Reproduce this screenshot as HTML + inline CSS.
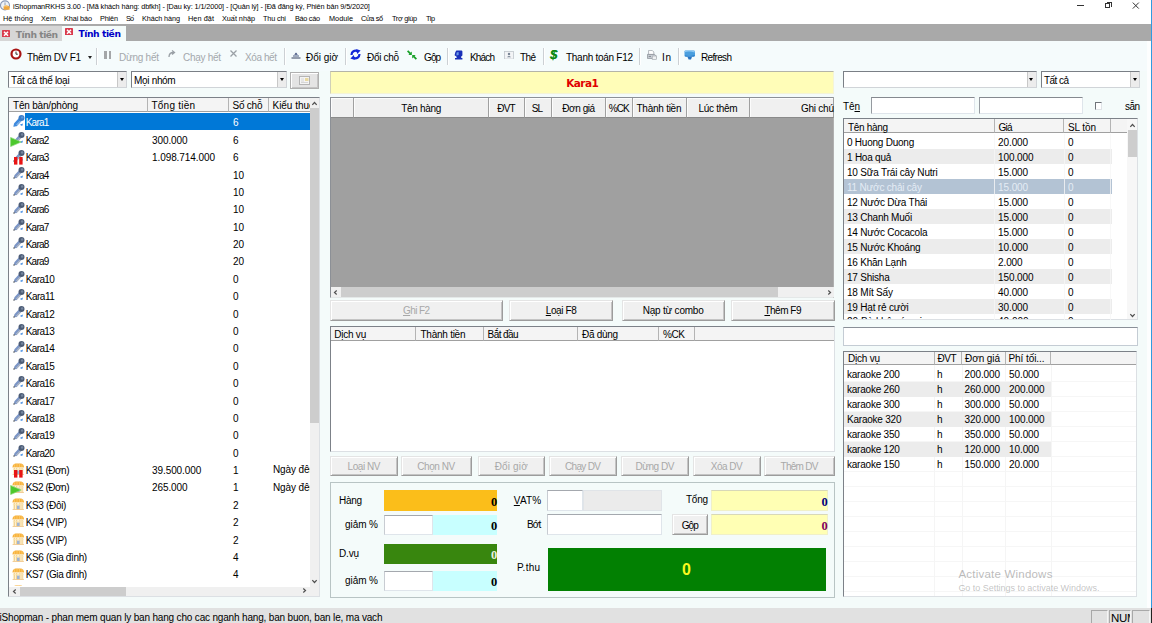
<!DOCTYPE html>
<html><head><meta charset="utf-8"><title>iShopmanRKHS</title>
<style>
*{box-sizing:border-box;margin:0;padding:0}
html,body{width:1152px;height:623px;overflow:hidden}
body{background:#f4fbfa;font-family:"Liberation Sans",sans-serif;font-size:10px;color:#000;position:relative}
.a{position:absolute;white-space:nowrap}
.t{position:absolute;white-space:nowrap;line-height:12px}
.btn{position:absolute;background:#f0f0f0;border:1px solid #9c9c9c;border-top-color:#e4e4e4;border-left-color:#e4e4e4;box-shadow:inset 1px 1px 0 #fff,inset -1px -1px 0 #c4c4c4}
.btn.dis{background:#f0f0f0}
.hdr{position:absolute;background:#f4f4f4;border-right:1px solid #b4b4b4;border-bottom:1px solid #a0a0a0}
.inp{position:absolute;background:#fff;border:1px solid #dfe5eb;border-top-color:#a4a8ae;border-left-color:#c8ccd2}
.cmb{position:absolute;background:#fff;border:1px solid #7a7f86;border-bottom-color:#d0d4d8;border-right-color:#d0d4d8}
.cmb i{position:absolute;right:0;top:0;bottom:0;width:9px;background:#ececec;border-left:1px solid #c8c8c8}
.cmb i:after{content:"";position:absolute;left:1.5px;top:6px;border:2.5px solid transparent;border-top:3px solid #000}
.sep{position:absolute;width:1px;background:#ccd0d4;top:48px;height:17px;box-shadow:1px 0 0 #fff}
.lst{position:absolute;background:#fff;border:1px solid #7c8188;border-right-color:#dce0e4;border-bottom-color:#dce0e4;overflow:hidden}
</style></head><body>

<div class="a" style="left:0;top:0;width:1152px;height:25px;background:#fff"></div>
<svg class="a" style="left:0;top:0" width="11" height="11" viewBox="0 0 11 11"><circle cx="5" cy="5.4" r="4.5" fill="#eef2f6" stroke="#8a9ab8" stroke-width="1.1"/><path d="M5 2.4V5.4" stroke="#7888a8" stroke-width=".8"/><path d="M3.6 6.2L6 5L9.6 6.4V9.8H3.6Z" fill="#f0a63c"/><path d="M4.4 6.4L6 5.6L7.4 6.6" stroke="#fbe0a8" stroke-width=".8" fill="none"/></svg>
<div class="t" style="left:13.00px;top:0.60px;line-height:12px;font-size:7.3px;letter-spacing:-0.101px;color:#000">iShopmanRKHS 3.00 - [Mã khách hàng: dbfkh] - [Dau ky: 1/1/2000] - [Quản lý] - [Đã đăng ký, Phiên bản 9/5/2020]</div>
<div class="a" style="left:1077px;top:5px;width:6.5px;height:1px;background:#333"></div>
<div class="a" style="left:1105px;top:3px;width:5px;height:5px;border:1px solid #333"></div>
<div class="a" style="left:1106.5px;top:1.5px;width:5px;height:5px;border-top:1px solid #333;border-right:1px solid #333"></div>
<svg class="a" style="left:1132px;top:1.5px" width="8" height="8"><path d="M0.8 0.6L6.8 6.6M6.8 0.6L0.8 6.6" stroke="#333" stroke-width="1"/></svg>
<div class="t" style="left:3.00px;top:12.80px;line-height:12px;font-size:7.3px;letter-spacing:0.053px">Hệ thống</div>
<div class="t" style="left:41.00px;top:12.80px;line-height:12px;font-size:7.3px;letter-spacing:-0.005px">Xem</div>
<div class="t" style="left:64.00px;top:12.80px;line-height:12px;font-size:7.3px;letter-spacing:-0.117px">Khai báo</div>
<div class="t" style="left:100.00px;top:12.80px;line-height:12px;font-size:7.3px;letter-spacing:-0.168px">Phiên</div>
<div class="t" style="left:126.00px;top:12.80px;line-height:12px;font-size:7.3px;letter-spacing:-0.900px">Số</div>
<div class="t" style="left:142.00px;top:12.80px;line-height:12px;font-size:7.3px;letter-spacing:-0.107px">Khách hàng</div>
<div class="t" style="left:188.00px;top:12.80px;line-height:12px;font-size:7.3px;letter-spacing:0.072px">Hẹn đặt</div>
<div class="t" style="left:222.00px;top:12.80px;line-height:12px;font-size:7.3px;letter-spacing:-0.036px">Xuất nhập</div>
<div class="t" style="left:263.00px;top:12.80px;line-height:12px;font-size:7.3px;letter-spacing:-0.156px">Thu chi</div>
<div class="t" style="left:295.00px;top:12.80px;line-height:12px;font-size:7.3px;letter-spacing:-0.298px">Báo cáo</div>
<div class="t" style="left:329.00px;top:12.80px;line-height:12px;font-size:7.3px;letter-spacing:0.011px">Module</div>
<div class="t" style="left:361.00px;top:12.80px;line-height:12px;font-size:7.3px;letter-spacing:-0.391px">Cửa sổ</div>
<div class="t" style="left:392.00px;top:12.80px;line-height:12px;font-size:7.3px;letter-spacing:-0.319px">Trợ giúp</div>
<div class="t" style="left:426.00px;top:12.80px;line-height:12px;font-size:7.3px;letter-spacing:-0.435px">Tip</div>
<div class="a" style="left:0;top:24.3px;width:1150.6px;height:17px;background:#a9a9a9"></div>
<div class="a" style="left:0;top:25.4px;width:62px;height:15.9px;background:#d6d6d6;border-top:1px solid #b4b4b4"></div>
<div class="a" style="left:61.7px;top:25.6px;width:63.9px;height:16px;background:#f4fbfa"></div>
<svg class="a" style="left:2px;top:30px" width="8" height="7.4" viewBox="0 0 8 7.4"><rect x="0" y="0" width="8" height="7.4" rx=".6" fill="#d93a4c"/><path d="M2 1.7L6 5.7M6 1.7L2 5.7" stroke="#fff" stroke-width="1.5"/></svg>
<svg class="a" style="left:65px;top:28px" width="8" height="7.4" viewBox="0 0 8 7.4"><rect x="0" y="0" width="8" height="7.4" rx=".6" fill="#d93a4c"/><path d="M2 1.7L6 5.7M6 1.7L2 5.7" stroke="#fff" stroke-width="1.5"/></svg>
<div class="t" style="left:15.80px;top:28.80px;line-height:12px;font-size:9.2px;letter-spacing:-0.459px;color:#858585;font-weight:bold;font-family:'DejaVu Sans',sans-serif">Tính tiền</div>
<div class="t" style="left:78.50px;top:28.30px;line-height:12px;font-size:9.2px;letter-spacing:-0.447px;color:#0000c8;font-weight:bold;font-family:'DejaVu Sans',sans-serif">Tính tiền</div>
<div class="a" style="left:0;top:41.3px;width:1149.4px;height:29.7px;background:#f5fbfc"></div>
<div class="t" style="left:27.00px;top:51.80px;line-height:12px;letter-spacing:-0.298px">Thêm DV F1</div>
<div class="t" style="left:119.00px;top:51.80px;line-height:12px;letter-spacing:-0.246px;color:#a4a8ac">Dừng hết</div>
<div class="t" style="left:183.00px;top:51.80px;line-height:12px;letter-spacing:-0.289px;color:#a4a8ac">Chạy hết</div>
<div class="t" style="left:245.00px;top:51.80px;line-height:12px;letter-spacing:-0.412px;color:#a4a8ac">Xóa hết</div>
<div class="t" style="left:306.00px;top:51.80px;line-height:12px;letter-spacing:-0.021px">Đổi giờ</div>
<div class="t" style="left:367.00px;top:51.80px;line-height:12px;letter-spacing:-0.318px">Đổi chỗ</div>
<div class="t" style="left:424.00px;top:51.80px;line-height:12px;letter-spacing:-0.900px">Gộp</div>
<div class="t" style="left:470.00px;top:51.80px;line-height:12px;letter-spacing:-0.839px">Khách</div>
<div class="t" style="left:520.00px;top:51.80px;line-height:12px;letter-spacing:-0.616px">Thẻ</div>
<div class="t" style="left:566.00px;top:51.80px;line-height:12px;letter-spacing:-0.277px">Thanh toán F12</div>
<div class="t" style="left:662.00px;top:51.80px;line-height:12px;letter-spacing:0.660px">In</div>
<div class="t" style="left:701.00px;top:51.80px;line-height:12px;letter-spacing:-0.669px">Refresh</div>
<div class="sep" style="left:96px"></div>
<div class="sep" style="left:284px"></div>
<div class="sep" style="left:345px"></div>
<div class="sep" style="left:447px"></div>
<div class="sep" style="left:543px"></div>
<div class="sep" style="left:639px"></div>
<div class="sep" style="left:678px"></div>
<svg class="a" style="left:10.2px;top:48.2px" width="12" height="12" viewBox="0 0 12 12"><circle cx="6" cy="6" r="4.5" fill="#fff" stroke="#a81414" stroke-width="2.2"/><path d="M6 3.6V6.2H7.8" stroke="#333" stroke-width="1" fill="none"/></svg>
<div class="a" style="left:87.5px;top:56px;border:2.5px solid transparent;border-top:3px solid #222"></div>
<div class="a" style="left:104px;top:50.5px;width:2.6px;height:8px;background:#a4a6a8"></div><div class="a" style="left:108.6px;top:50.5px;width:2.6px;height:8px;background:#a4a6a8"></div>
<svg class="a" style="left:167px;top:49px" width="10" height="10" viewBox="0 0 10 10"><path d="M2 8C2 5 4 3.5 6.5 3.5M5 1.5L7.5 3.5L5 5.5" stroke="#9aa0a6" stroke-width="1.3" fill="none"/></svg>
<svg class="a" style="left:229px;top:49px" width="9" height="9" viewBox="0 0 9 9"><path d="M1.5 1.5L7.5 7.5M7.5 1.5L1.5 7.5" stroke="#9aa0a6" stroke-width="1.3"/></svg>
<svg class="a" style="left:291px;top:52px" width="10" height="7" viewBox="0 0 10 7"><path d="M0.5 6H9.5" stroke="#44506c" stroke-width="1.1"/><path d="M2 4H8" stroke="#5a6a8c" stroke-width="1.1"/><path d="M5 0.4L3.2 2.8H6.8Z" fill="#3a4a78"/></svg>
<svg class="a" style="left:350px;top:49px" width="11" height="11" viewBox="0 0 11 11"><path d="M1.6 6A3.9 3.9 0 0 1 7.6 2.3" stroke="#1428d8" stroke-width="2.2" fill="none"/><path d="M6.2 0L10.6 1.6L7.2 5Z" fill="#1428d8"/><path d="M9.4 5A3.9 3.9 0 0 1 3.4 8.7" stroke="#1428d8" stroke-width="2.2" fill="none"/><path d="M4.8 11L0.4 9.4L3.8 6Z" fill="#1428d8"/></svg>
<svg class="a" style="left:407px;top:49.5px" width="10" height="10" viewBox="0 0 10 10"><path d="M0.6 0.8L3.4 3.6" stroke="#18a028" stroke-width="1.8"/><path d="M4.8 1.6V5H1.4Z" fill="#18a028"/><path d="M9.4 9.2L6.6 6.4" stroke="#18a028" stroke-width="1.8"/><path d="M5.2 8.4V5H8.6Z" fill="#18a028"/></svg>
<svg class="a" style="left:454px;top:49.5px" width="9" height="10" viewBox="0 0 9 10"><path d="M2.4 0.4H7.6Q8.4 0.6 8.4 1.6V5.4L7.2 6.6V8H8.4V9.6H1V8H2.6V6.8L0.6 5.2L1.4 2Z" fill="#1a30b8"/><path d="M2.6 2.4L4.6 2V5L2.4 5.4Z" fill="#6a9ae8"/></svg>
<svg class="a" style="left:504px;top:50.5px" width="10" height="8.5" viewBox="0 0 10 8.5"><rect x="0.4" y="0.4" width="9.2" height="7.7" fill="#f2f4f6" stroke="#c0c6cc" stroke-width=".8"/><circle cx="5" cy="3" r="1.2" fill="#7a8696"/><path d="M3 6.2Q5 3.6 7 6.2Z" fill="#7a8696"/></svg>
<div class="t" style="left:549.88px;top:47.80px;line-height:14px;font-size:13px;color:#0c8a14;font-weight:bold;font-style:italic;text-shadow:0.4px 0 0 #0c8a14">$</div>
<svg class="a" style="left:646.5px;top:50px" width="10" height="10" viewBox="0 0 10 10"><path d="M1.6 0.4H5.2L6.8 2V4.6H1.6Z" fill="#fff" stroke="#a0a6ac" stroke-width=".8"/><path d="M0.4 4.4H7.6L8.8 5.6V8.4H0.4Z" fill="#cdd2d8" stroke="#8c9298" stroke-width=".8"/><rect x="5.2" y="6" width="4.2" height="3.4" fill="#eef0f2" stroke="#9aa0a6" stroke-width=".6"/><path d="M1.6 6.4H4" stroke="#70767c" stroke-width=".8"/></svg>
<svg class="a" style="left:683.5px;top:50px" width="11.5" height="10" viewBox="0 0 11.5 10"><path d="M1.4 0.5H9.6Q11 0.5 11 1.8V5.4Q11 6.8 9.6 6.8H1.8Q0.5 6.8 0.5 5.4V1.6Q0.5 0.5 1.4 0.5Z" fill="#4a9ede"/><path d="M0.8 2.2Q5 0.6 10.8 2.6V1.8Q10.8 0.7 9.6 0.7H1.6Q0.8 0.7 0.8 1.6Z" fill="#8cc8f4"/><path d="M3.4 6.8H8L7 9.4H4.6Z" fill="#2a74c0"/><path d="M1 5.2Q5 6.8 10.6 5V5.6Q10.4 6.6 9.4 6.6H2Q1 6.6 1 5.6Z" fill="#2c7cc8"/></svg>
<div class="cmb" style="left:8px;top:71.2px;width:119px;height:17.0px"><i></i></div>
<div class="t" style="left:11.00px;top:74.50px;line-height:12px;letter-spacing:-0.301px">Tất cả thể loại</div>
<div class="cmb" style="left:131px;top:71.2px;width:156px;height:17.0px"><i></i></div>
<div class="t" style="left:134.00px;top:74.50px;line-height:12px;letter-spacing:-0.315px">Mọi nhóm</div>
<div class="btn" style="left:290px;top:72px;width:29px;height:17px;background:#e4e4e4;border-color:#b0b0b0"></div>
<svg class="a" style="left:299px;top:76px" width="11" height="9" viewBox="0 0 11 9"><rect x="0.5" y="0.5" width="10" height="8" fill="#f4f4f4" stroke="#b4b4b4"/><rect x="6" y="2" width="3.5" height="3" fill="#e8d8a0"/><path d="M2 3H5M2 5H5M2 6.5H9" stroke="#c8c8c8" stroke-width=".7"/></svg>
<div class="lst" style="left:8px;top:97px;width:312px;height:499.5px"></div>
<div class="hdr" style="left:9px;top:98px;width:138.5px;height:14px;"></div>
<div class="t" style="left:13.00px;top:99.80px;line-height:12px;letter-spacing:-0.190px">Tên bàn/phòng</div>
<div class="hdr" style="left:147.5px;top:98px;width:81.0px;height:14px;"></div>
<div class="t" style="left:151.50px;top:99.80px;line-height:12px;letter-spacing:0.226px">Tổng tiền</div>
<div class="hdr" style="left:228.5px;top:98px;width:40.0px;height:14px;"></div>
<div class="t" style="left:232.50px;top:99.80px;line-height:12px;letter-spacing:-0.227px">Số chỗ</div>
<div class="hdr" style="left:268.5px;top:98px;width:41.5px;height:14px;border-right:none;"></div>
<div class="t" style="left:272.50px;top:99.80px;line-height:12px;letter-spacing:-0.032px">Kiểu thuê</div>
<div class="a" style="left:25px;top:113.30px;width:285px;height:16.8px;background:#0078d7"></div>
<svg class="a" style="left:12.5px;top:114.9px" width="12" height="12" viewBox="0 0 12 12"><path d="M0.6 11.6L3.4 8.6" stroke="#5a98d8" stroke-width="1.5"/><path d="M2.8 9.4L7.2 4.6" stroke="#3f8ade" stroke-width="3.8" stroke-linecap="round"/><path d="M3.6 10L7.8 5.6" stroke="#8ab8e8" stroke-width="1.1"/><circle cx="8.5" cy="3.1" r="3" fill="#3a7cc8"/><circle cx="9.2" cy="2.4" r="1.2" fill="#5a98dc"/><path d="M6.8 9.8L10 8.6L9.2 11Z" fill="#2a82e0"/></svg>
<div class="t" style="left:25.70px;top:117.40px;line-height:12px;letter-spacing:-0.746px;color:#fff">Kara1</div>
<div class="t" style="left:233.00px;top:117.40px;line-height:12px;color:#fff">6</div>
<svg class="a" style="left:12.5px;top:132.28px" width="12" height="12" viewBox="0 0 12 12"><path d="M0.5 11.6L3.6 8.4" stroke="#70767e" stroke-width="1.5"/><path d="M2.9 9.3L7.1 4.7" stroke="#7c96c6" stroke-width="3.5" stroke-linecap="round"/><path d="M3.4 10.1L8 5.4" stroke="#b4bac4" stroke-width="1.2"/><circle cx="8.5" cy="3.1" r="3" fill="#4c5c76"/><circle cx="9.1" cy="2.5" r="1.2" fill="#7686a0"/><path d="M6.8 9.9L10 8.6L9.2 11Z" fill="#3a86e0"/></svg>
<svg class="a" style="left:9.8px;top:136.99px" width="12" height="10" viewBox="0 0 12 10"><path d="M0.6 0.4L11.2 5L0.6 9.6Z" fill="#4cc82c" stroke="#8ad878" stroke-width=".7"/></svg>
<div class="t" style="left:25.70px;top:134.79px;line-height:12px;letter-spacing:-0.746px">Kara2</div>
<div class="t" style="left:152.00px;top:134.79px;line-height:12px;letter-spacing:-0.090px">300.000</div>
<div class="t" style="left:233.00px;top:134.79px;line-height:12px">6</div>
<svg class="a" style="left:12.5px;top:149.67px" width="12" height="12" viewBox="0 0 12 12"><path d="M0.5 11.6L3.6 8.4" stroke="#70767e" stroke-width="1.5"/><path d="M2.9 9.3L7.1 4.7" stroke="#7c96c6" stroke-width="3.5" stroke-linecap="round"/><path d="M3.4 10.1L8 5.4" stroke="#b4bac4" stroke-width="1.2"/><circle cx="8.5" cy="3.1" r="3" fill="#4c5c76"/><circle cx="9.1" cy="2.5" r="1.2" fill="#7686a0"/><path d="M6.8 9.9L10 8.6L9.2 11Z" fill="#3a86e0"/></svg>
<svg class="a" style="left:13.6px;top:156.67px" width="9" height="8" viewBox="0 0 9 8"><rect x="0" y="0" width="3.4" height="7.6" fill="#e81414"/><rect x="5.2" y="0" width="3.4" height="7.6" fill="#e81414"/></svg>
<div class="t" style="left:25.70px;top:152.17px;line-height:12px;letter-spacing:-0.746px">Kara3</div>
<div class="t" style="left:152.00px;top:152.17px;line-height:12px;letter-spacing:-0.080px">1.098.714.000</div>
<div class="t" style="left:233.00px;top:152.17px;line-height:12px">6</div>
<svg class="a" style="left:12.5px;top:167.05px" width="12" height="12" viewBox="0 0 12 12"><path d="M0.5 11.6L3.6 8.4" stroke="#70767e" stroke-width="1.5"/><path d="M2.9 9.3L7.1 4.7" stroke="#7c96c6" stroke-width="3.5" stroke-linecap="round"/><path d="M3.4 10.1L8 5.4" stroke="#b4bac4" stroke-width="1.2"/><circle cx="8.5" cy="3.1" r="3" fill="#4c5c76"/><circle cx="9.1" cy="2.5" r="1.2" fill="#7686a0"/><path d="M6.8 9.9L10 8.6L9.2 11Z" fill="#3a86e0"/></svg>
<div class="t" style="left:25.70px;top:169.56px;line-height:12px;letter-spacing:-0.746px">Kara4</div>
<div class="t" style="left:233.00px;top:169.56px;line-height:12px">10</div>
<svg class="a" style="left:12.5px;top:184.44px" width="12" height="12" viewBox="0 0 12 12"><path d="M0.5 11.6L3.6 8.4" stroke="#70767e" stroke-width="1.5"/><path d="M2.9 9.3L7.1 4.7" stroke="#7c96c6" stroke-width="3.5" stroke-linecap="round"/><path d="M3.4 10.1L8 5.4" stroke="#b4bac4" stroke-width="1.2"/><circle cx="8.5" cy="3.1" r="3" fill="#4c5c76"/><circle cx="9.1" cy="2.5" r="1.2" fill="#7686a0"/><path d="M6.8 9.9L10 8.6L9.2 11Z" fill="#3a86e0"/></svg>
<div class="t" style="left:25.70px;top:186.94px;line-height:12px;letter-spacing:-0.746px">Kara5</div>
<div class="t" style="left:233.00px;top:186.94px;line-height:12px">10</div>
<svg class="a" style="left:12.5px;top:201.83px" width="12" height="12" viewBox="0 0 12 12"><path d="M0.5 11.6L3.6 8.4" stroke="#70767e" stroke-width="1.5"/><path d="M2.9 9.3L7.1 4.7" stroke="#7c96c6" stroke-width="3.5" stroke-linecap="round"/><path d="M3.4 10.1L8 5.4" stroke="#b4bac4" stroke-width="1.2"/><circle cx="8.5" cy="3.1" r="3" fill="#4c5c76"/><circle cx="9.1" cy="2.5" r="1.2" fill="#7686a0"/><path d="M6.8 9.9L10 8.6L9.2 11Z" fill="#3a86e0"/></svg>
<div class="t" style="left:25.70px;top:204.33px;line-height:12px;letter-spacing:-0.746px">Kara6</div>
<div class="t" style="left:233.00px;top:204.33px;line-height:12px">10</div>
<svg class="a" style="left:12.5px;top:219.21px" width="12" height="12" viewBox="0 0 12 12"><path d="M0.5 11.6L3.6 8.4" stroke="#70767e" stroke-width="1.5"/><path d="M2.9 9.3L7.1 4.7" stroke="#7c96c6" stroke-width="3.5" stroke-linecap="round"/><path d="M3.4 10.1L8 5.4" stroke="#b4bac4" stroke-width="1.2"/><circle cx="8.5" cy="3.1" r="3" fill="#4c5c76"/><circle cx="9.1" cy="2.5" r="1.2" fill="#7686a0"/><path d="M6.8 9.9L10 8.6L9.2 11Z" fill="#3a86e0"/></svg>
<div class="t" style="left:25.70px;top:221.71px;line-height:12px;letter-spacing:-0.746px">Kara7</div>
<div class="t" style="left:233.00px;top:221.71px;line-height:12px">10</div>
<svg class="a" style="left:12.5px;top:236.59px" width="12" height="12" viewBox="0 0 12 12"><path d="M0.5 11.6L3.6 8.4" stroke="#70767e" stroke-width="1.5"/><path d="M2.9 9.3L7.1 4.7" stroke="#7c96c6" stroke-width="3.5" stroke-linecap="round"/><path d="M3.4 10.1L8 5.4" stroke="#b4bac4" stroke-width="1.2"/><circle cx="8.5" cy="3.1" r="3" fill="#4c5c76"/><circle cx="9.1" cy="2.5" r="1.2" fill="#7686a0"/><path d="M6.8 9.9L10 8.6L9.2 11Z" fill="#3a86e0"/></svg>
<div class="t" style="left:25.70px;top:239.10px;line-height:12px;letter-spacing:-0.746px">Kara8</div>
<div class="t" style="left:233.00px;top:239.10px;line-height:12px">20</div>
<svg class="a" style="left:12.5px;top:253.98px" width="12" height="12" viewBox="0 0 12 12"><path d="M0.5 11.6L3.6 8.4" stroke="#70767e" stroke-width="1.5"/><path d="M2.9 9.3L7.1 4.7" stroke="#7c96c6" stroke-width="3.5" stroke-linecap="round"/><path d="M3.4 10.1L8 5.4" stroke="#b4bac4" stroke-width="1.2"/><circle cx="8.5" cy="3.1" r="3" fill="#4c5c76"/><circle cx="9.1" cy="2.5" r="1.2" fill="#7686a0"/><path d="M6.8 9.9L10 8.6L9.2 11Z" fill="#3a86e0"/></svg>
<div class="t" style="left:25.70px;top:256.48px;line-height:12px;letter-spacing:-0.746px">Kara9</div>
<div class="t" style="left:233.00px;top:256.48px;line-height:12px">20</div>
<svg class="a" style="left:12.5px;top:271.37px" width="12" height="12" viewBox="0 0 12 12"><path d="M0.5 11.6L3.6 8.4" stroke="#70767e" stroke-width="1.5"/><path d="M2.9 9.3L7.1 4.7" stroke="#7c96c6" stroke-width="3.5" stroke-linecap="round"/><path d="M3.4 10.1L8 5.4" stroke="#b4bac4" stroke-width="1.2"/><circle cx="8.5" cy="3.1" r="3" fill="#4c5c76"/><circle cx="9.1" cy="2.5" r="1.2" fill="#7686a0"/><path d="M6.8 9.9L10 8.6L9.2 11Z" fill="#3a86e0"/></svg>
<div class="t" style="left:25.70px;top:273.87px;line-height:12px;letter-spacing:-0.609px">Kara10</div>
<div class="t" style="left:233.00px;top:273.87px;line-height:12px">0</div>
<svg class="a" style="left:12.5px;top:288.75px" width="12" height="12" viewBox="0 0 12 12"><path d="M0.5 11.6L3.6 8.4" stroke="#70767e" stroke-width="1.5"/><path d="M2.9 9.3L7.1 4.7" stroke="#7c96c6" stroke-width="3.5" stroke-linecap="round"/><path d="M3.4 10.1L8 5.4" stroke="#b4bac4" stroke-width="1.2"/><circle cx="8.5" cy="3.1" r="3" fill="#4c5c76"/><circle cx="9.1" cy="2.5" r="1.2" fill="#7686a0"/><path d="M6.8 9.9L10 8.6L9.2 11Z" fill="#3a86e0"/></svg>
<div class="t" style="left:25.70px;top:291.25px;line-height:12px;letter-spacing:-0.461px">Kara11</div>
<div class="t" style="left:233.00px;top:291.25px;line-height:12px">0</div>
<svg class="a" style="left:12.5px;top:306.14px" width="12" height="12" viewBox="0 0 12 12"><path d="M0.5 11.6L3.6 8.4" stroke="#70767e" stroke-width="1.5"/><path d="M2.9 9.3L7.1 4.7" stroke="#7c96c6" stroke-width="3.5" stroke-linecap="round"/><path d="M3.4 10.1L8 5.4" stroke="#b4bac4" stroke-width="1.2"/><circle cx="8.5" cy="3.1" r="3" fill="#4c5c76"/><circle cx="9.1" cy="2.5" r="1.2" fill="#7686a0"/><path d="M6.8 9.9L10 8.6L9.2 11Z" fill="#3a86e0"/></svg>
<div class="t" style="left:25.70px;top:308.64px;line-height:12px;letter-spacing:-0.609px">Kara12</div>
<div class="t" style="left:233.00px;top:308.64px;line-height:12px">0</div>
<svg class="a" style="left:12.5px;top:323.52px" width="12" height="12" viewBox="0 0 12 12"><path d="M0.5 11.6L3.6 8.4" stroke="#70767e" stroke-width="1.5"/><path d="M2.9 9.3L7.1 4.7" stroke="#7c96c6" stroke-width="3.5" stroke-linecap="round"/><path d="M3.4 10.1L8 5.4" stroke="#b4bac4" stroke-width="1.2"/><circle cx="8.5" cy="3.1" r="3" fill="#4c5c76"/><circle cx="9.1" cy="2.5" r="1.2" fill="#7686a0"/><path d="M6.8 9.9L10 8.6L9.2 11Z" fill="#3a86e0"/></svg>
<div class="t" style="left:25.70px;top:326.02px;line-height:12px;letter-spacing:-0.609px">Kara13</div>
<div class="t" style="left:233.00px;top:326.02px;line-height:12px">0</div>
<svg class="a" style="left:12.5px;top:340.91px" width="12" height="12" viewBox="0 0 12 12"><path d="M0.5 11.6L3.6 8.4" stroke="#70767e" stroke-width="1.5"/><path d="M2.9 9.3L7.1 4.7" stroke="#7c96c6" stroke-width="3.5" stroke-linecap="round"/><path d="M3.4 10.1L8 5.4" stroke="#b4bac4" stroke-width="1.2"/><circle cx="8.5" cy="3.1" r="3" fill="#4c5c76"/><circle cx="9.1" cy="2.5" r="1.2" fill="#7686a0"/><path d="M6.8 9.9L10 8.6L9.2 11Z" fill="#3a86e0"/></svg>
<div class="t" style="left:25.70px;top:343.41px;line-height:12px;letter-spacing:-0.609px">Kara14</div>
<div class="t" style="left:233.00px;top:343.41px;line-height:12px">0</div>
<svg class="a" style="left:12.5px;top:358.29px" width="12" height="12" viewBox="0 0 12 12"><path d="M0.5 11.6L3.6 8.4" stroke="#70767e" stroke-width="1.5"/><path d="M2.9 9.3L7.1 4.7" stroke="#7c96c6" stroke-width="3.5" stroke-linecap="round"/><path d="M3.4 10.1L8 5.4" stroke="#b4bac4" stroke-width="1.2"/><circle cx="8.5" cy="3.1" r="3" fill="#4c5c76"/><circle cx="9.1" cy="2.5" r="1.2" fill="#7686a0"/><path d="M6.8 9.9L10 8.6L9.2 11Z" fill="#3a86e0"/></svg>
<div class="t" style="left:25.70px;top:360.79px;line-height:12px;letter-spacing:-0.609px">Kara15</div>
<div class="t" style="left:233.00px;top:360.79px;line-height:12px">0</div>
<svg class="a" style="left:12.5px;top:375.68px" width="12" height="12" viewBox="0 0 12 12"><path d="M0.5 11.6L3.6 8.4" stroke="#70767e" stroke-width="1.5"/><path d="M2.9 9.3L7.1 4.7" stroke="#7c96c6" stroke-width="3.5" stroke-linecap="round"/><path d="M3.4 10.1L8 5.4" stroke="#b4bac4" stroke-width="1.2"/><circle cx="8.5" cy="3.1" r="3" fill="#4c5c76"/><circle cx="9.1" cy="2.5" r="1.2" fill="#7686a0"/><path d="M6.8 9.9L10 8.6L9.2 11Z" fill="#3a86e0"/></svg>
<div class="t" style="left:25.70px;top:378.18px;line-height:12px;letter-spacing:-0.609px">Kara16</div>
<div class="t" style="left:233.00px;top:378.18px;line-height:12px">0</div>
<svg class="a" style="left:12.5px;top:393.06px" width="12" height="12" viewBox="0 0 12 12"><path d="M0.5 11.6L3.6 8.4" stroke="#70767e" stroke-width="1.5"/><path d="M2.9 9.3L7.1 4.7" stroke="#7c96c6" stroke-width="3.5" stroke-linecap="round"/><path d="M3.4 10.1L8 5.4" stroke="#b4bac4" stroke-width="1.2"/><circle cx="8.5" cy="3.1" r="3" fill="#4c5c76"/><circle cx="9.1" cy="2.5" r="1.2" fill="#7686a0"/><path d="M6.8 9.9L10 8.6L9.2 11Z" fill="#3a86e0"/></svg>
<div class="t" style="left:25.70px;top:395.56px;line-height:12px;letter-spacing:-0.609px">Kara17</div>
<div class="t" style="left:233.00px;top:395.56px;line-height:12px">0</div>
<svg class="a" style="left:12.5px;top:410.45px" width="12" height="12" viewBox="0 0 12 12"><path d="M0.5 11.6L3.6 8.4" stroke="#70767e" stroke-width="1.5"/><path d="M2.9 9.3L7.1 4.7" stroke="#7c96c6" stroke-width="3.5" stroke-linecap="round"/><path d="M3.4 10.1L8 5.4" stroke="#b4bac4" stroke-width="1.2"/><circle cx="8.5" cy="3.1" r="3" fill="#4c5c76"/><circle cx="9.1" cy="2.5" r="1.2" fill="#7686a0"/><path d="M6.8 9.9L10 8.6L9.2 11Z" fill="#3a86e0"/></svg>
<div class="t" style="left:25.70px;top:412.95px;line-height:12px;letter-spacing:-0.609px">Kara18</div>
<div class="t" style="left:233.00px;top:412.95px;line-height:12px">0</div>
<svg class="a" style="left:12.5px;top:427.83px" width="12" height="12" viewBox="0 0 12 12"><path d="M0.5 11.6L3.6 8.4" stroke="#70767e" stroke-width="1.5"/><path d="M2.9 9.3L7.1 4.7" stroke="#7c96c6" stroke-width="3.5" stroke-linecap="round"/><path d="M3.4 10.1L8 5.4" stroke="#b4bac4" stroke-width="1.2"/><circle cx="8.5" cy="3.1" r="3" fill="#4c5c76"/><circle cx="9.1" cy="2.5" r="1.2" fill="#7686a0"/><path d="M6.8 9.9L10 8.6L9.2 11Z" fill="#3a86e0"/></svg>
<div class="t" style="left:25.70px;top:430.33px;line-height:12px;letter-spacing:-0.609px">Kara19</div>
<div class="t" style="left:233.00px;top:430.33px;line-height:12px">0</div>
<svg class="a" style="left:12.5px;top:445.22px" width="12" height="12" viewBox="0 0 12 12"><path d="M0.5 11.6L3.6 8.4" stroke="#70767e" stroke-width="1.5"/><path d="M2.9 9.3L7.1 4.7" stroke="#7c96c6" stroke-width="3.5" stroke-linecap="round"/><path d="M3.4 10.1L8 5.4" stroke="#b4bac4" stroke-width="1.2"/><circle cx="8.5" cy="3.1" r="3" fill="#4c5c76"/><circle cx="9.1" cy="2.5" r="1.2" fill="#7686a0"/><path d="M6.8 9.9L10 8.6L9.2 11Z" fill="#3a86e0"/></svg>
<div class="t" style="left:25.70px;top:447.72px;line-height:12px;letter-spacing:-0.609px">Kara20</div>
<div class="t" style="left:233.00px;top:447.72px;line-height:12px">0</div>
<svg class="a" style="left:12px;top:463.3px" width="12.5" height="12" viewBox="0 0 12.5 12"><path d="M0.4 4.6Q0.6 1.2 3.4 0.5H9.1Q11.9 1.2 12.1 4.6Z" fill="#f8b23e"/><path d="M2.6 1.2V4.4M5 0.8V4.4M7.5 0.8V4.4M9.9 1.2V4.4" stroke="#fbc868" stroke-width=".9"/><rect x="0.9" y="4.6" width="10.7" height="6.8" fill="#fdf1d2"/><path d="M2.4 5V11.2M4.6 5V11.2M7.9 5V11.2M10.1 5V11.2" stroke="#f3d290" stroke-width="1.1"/><path d="M0.9 6.6H11.6" stroke="#f8e4b4" stroke-width=".8"/><rect x="5" y="7.6" width="2.6" height="3.8" fill="#9fb4d4"/><path d="M0.6 11.5H11.9" stroke="#f0c890" stroke-width=".9"/></svg>
<svg class="a" style="left:13.6px;top:470.3px" width="9" height="8" viewBox="0 0 9 8"><rect x="0" y="0" width="3.4" height="7.6" fill="#e81414"/><rect x="5.2" y="0" width="3.4" height="7.6" fill="#e81414"/></svg>
<div class="t" style="left:25.70px;top:465.10px;line-height:12px;letter-spacing:-0.485px">KS1 (Đơn)</div>
<div class="t" style="left:152.00px;top:465.10px;line-height:12px;letter-spacing:-0.083px">39.500.000</div>
<div class="t" style="left:233.00px;top:465.10px;line-height:12px">1</div>
<div class="t" style="left:273px;top:464.30px;width:37px;overflow:hidden;letter-spacing:-0.1px">Ngày đêm</div>
<svg class="a" style="left:12px;top:480.69px" width="12.5" height="12" viewBox="0 0 12.5 12"><path d="M0.4 4.6Q0.6 1.2 3.4 0.5H9.1Q11.9 1.2 12.1 4.6Z" fill="#f8b23e"/><path d="M2.6 1.2V4.4M5 0.8V4.4M7.5 0.8V4.4M9.9 1.2V4.4" stroke="#fbc868" stroke-width=".9"/><rect x="0.9" y="4.6" width="10.7" height="6.8" fill="#fdf1d2"/><path d="M2.4 5V11.2M4.6 5V11.2M7.9 5V11.2M10.1 5V11.2" stroke="#f3d290" stroke-width="1.1"/><path d="M0.9 6.6H11.6" stroke="#f8e4b4" stroke-width=".8"/><rect x="5" y="7.6" width="2.6" height="3.8" fill="#9fb4d4"/><path d="M0.6 11.5H11.9" stroke="#f0c890" stroke-width=".9"/></svg>
<svg class="a" style="left:9.8px;top:484.69px" width="12" height="10" viewBox="0 0 12 10"><path d="M0.6 0.4L11.2 5L0.6 9.6Z" fill="#4cc82c" stroke="#8ad878" stroke-width=".7"/></svg>
<div class="t" style="left:25.70px;top:482.49px;line-height:12px;letter-spacing:-0.485px">KS2 (Đơn)</div>
<div class="t" style="left:152.00px;top:482.49px;line-height:12px;letter-spacing:-0.090px">265.000</div>
<div class="t" style="left:233.00px;top:482.49px;line-height:12px">1</div>
<div class="t" style="left:273px;top:481.69px;width:37px;overflow:hidden;letter-spacing:-0.1px">Ngày đêm</div>
<svg class="a" style="left:12px;top:498.07px" width="12.5" height="12" viewBox="0 0 12.5 12"><path d="M0.4 4.6Q0.6 1.2 3.4 0.5H9.1Q11.9 1.2 12.1 4.6Z" fill="#f8b23e"/><path d="M2.6 1.2V4.4M5 0.8V4.4M7.5 0.8V4.4M9.9 1.2V4.4" stroke="#fbc868" stroke-width=".9"/><rect x="0.9" y="4.6" width="10.7" height="6.8" fill="#fdf1d2"/><path d="M2.4 5V11.2M4.6 5V11.2M7.9 5V11.2M10.1 5V11.2" stroke="#f3d290" stroke-width="1.1"/><path d="M0.9 6.6H11.6" stroke="#f8e4b4" stroke-width=".8"/><rect x="5" y="7.6" width="2.6" height="3.8" fill="#9fb4d4"/><path d="M0.6 11.5H11.9" stroke="#f0c890" stroke-width=".9"/></svg>
<div class="t" style="left:25.70px;top:499.87px;line-height:12px;letter-spacing:-0.331px">KS3 (Đôi)</div>
<div class="t" style="left:233.00px;top:499.87px;line-height:12px">2</div>
<svg class="a" style="left:12px;top:515.45px" width="12.5" height="12" viewBox="0 0 12.5 12"><path d="M0.4 4.6Q0.6 1.2 3.4 0.5H9.1Q11.9 1.2 12.1 4.6Z" fill="#f8b23e"/><path d="M2.6 1.2V4.4M5 0.8V4.4M7.5 0.8V4.4M9.9 1.2V4.4" stroke="#fbc868" stroke-width=".9"/><rect x="0.9" y="4.6" width="10.7" height="6.8" fill="#fdf1d2"/><path d="M2.4 5V11.2M4.6 5V11.2M7.9 5V11.2M10.1 5V11.2" stroke="#f3d290" stroke-width="1.1"/><path d="M0.9 6.6H11.6" stroke="#f8e4b4" stroke-width=".8"/><rect x="5" y="7.6" width="2.6" height="3.8" fill="#9fb4d4"/><path d="M0.6 11.5H11.9" stroke="#f0c890" stroke-width=".9"/></svg>
<div class="t" style="left:25.70px;top:517.25px;line-height:12px;letter-spacing:-0.370px">KS4 (VIP)</div>
<div class="t" style="left:233.00px;top:517.25px;line-height:12px">2</div>
<svg class="a" style="left:12px;top:532.84px" width="12.5" height="12" viewBox="0 0 12.5 12"><path d="M0.4 4.6Q0.6 1.2 3.4 0.5H9.1Q11.9 1.2 12.1 4.6Z" fill="#f8b23e"/><path d="M2.6 1.2V4.4M5 0.8V4.4M7.5 0.8V4.4M9.9 1.2V4.4" stroke="#fbc868" stroke-width=".9"/><rect x="0.9" y="4.6" width="10.7" height="6.8" fill="#fdf1d2"/><path d="M2.4 5V11.2M4.6 5V11.2M7.9 5V11.2M10.1 5V11.2" stroke="#f3d290" stroke-width="1.1"/><path d="M0.9 6.6H11.6" stroke="#f8e4b4" stroke-width=".8"/><rect x="5" y="7.6" width="2.6" height="3.8" fill="#9fb4d4"/><path d="M0.6 11.5H11.9" stroke="#f0c890" stroke-width=".9"/></svg>
<div class="t" style="left:25.70px;top:534.64px;line-height:12px;letter-spacing:-0.370px">KS5 (VIP)</div>
<div class="t" style="left:233.00px;top:534.64px;line-height:12px">2</div>
<svg class="a" style="left:12px;top:550.23px" width="12.5" height="12" viewBox="0 0 12.5 12"><path d="M0.4 4.6Q0.6 1.2 3.4 0.5H9.1Q11.9 1.2 12.1 4.6Z" fill="#f8b23e"/><path d="M2.6 1.2V4.4M5 0.8V4.4M7.5 0.8V4.4M9.9 1.2V4.4" stroke="#fbc868" stroke-width=".9"/><rect x="0.9" y="4.6" width="10.7" height="6.8" fill="#fdf1d2"/><path d="M2.4 5V11.2M4.6 5V11.2M7.9 5V11.2M10.1 5V11.2" stroke="#f3d290" stroke-width="1.1"/><path d="M0.9 6.6H11.6" stroke="#f8e4b4" stroke-width=".8"/><rect x="5" y="7.6" width="2.6" height="3.8" fill="#9fb4d4"/><path d="M0.6 11.5H11.9" stroke="#f0c890" stroke-width=".9"/></svg>
<div class="t" style="left:25.70px;top:552.02px;line-height:12px;letter-spacing:-0.357px">KS6 (Gia đình)</div>
<div class="t" style="left:233.00px;top:552.02px;line-height:12px">4</div>
<svg class="a" style="left:12px;top:567.61px" width="12.5" height="12" viewBox="0 0 12.5 12"><path d="M0.4 4.6Q0.6 1.2 3.4 0.5H9.1Q11.9 1.2 12.1 4.6Z" fill="#f8b23e"/><path d="M2.6 1.2V4.4M5 0.8V4.4M7.5 0.8V4.4M9.9 1.2V4.4" stroke="#fbc868" stroke-width=".9"/><rect x="0.9" y="4.6" width="10.7" height="6.8" fill="#fdf1d2"/><path d="M2.4 5V11.2M4.6 5V11.2M7.9 5V11.2M10.1 5V11.2" stroke="#f3d290" stroke-width="1.1"/><path d="M0.9 6.6H11.6" stroke="#f8e4b4" stroke-width=".8"/><rect x="5" y="7.6" width="2.6" height="3.8" fill="#9fb4d4"/><path d="M0.6 11.5H11.9" stroke="#f0c890" stroke-width=".9"/></svg>
<div class="t" style="left:25.70px;top:569.41px;line-height:12px;letter-spacing:-0.357px">KS7 (Gia đình)</div>
<div class="t" style="left:233.00px;top:569.41px;line-height:12px">4</div>
<div class="a" style="left:12px;top:584.5px;width:12px;height:1.5px;overflow:hidden"><svg class="a" style="left:0px;top:0px" width="12.5" height="12" viewBox="0 0 12.5 12"><path d="M0.4 4.6Q0.6 1.2 3.4 0.5H9.1Q11.9 1.2 12.1 4.6Z" fill="#f8b23e"/><path d="M2.6 1.2V4.4M5 0.8V4.4M7.5 0.8V4.4M9.9 1.2V4.4" stroke="#fbc868" stroke-width=".9"/><rect x="0.9" y="4.6" width="10.7" height="6.8" fill="#fdf1d2"/><path d="M2.4 5V11.2M4.6 5V11.2M7.9 5V11.2M10.1 5V11.2" stroke="#f3d290" stroke-width="1.1"/><path d="M0.9 6.6H11.6" stroke="#f8e4b4" stroke-width=".8"/><rect x="5" y="7.6" width="2.6" height="3.8" fill="#9fb4d4"/><path d="M0.6 11.5H11.9" stroke="#f0c890" stroke-width=".9"/></svg></div>
<div class="a" style="left:310px;top:98px;width:9px;height:488.5px;background:#f0f0f0"></div>
<div class="a" style="left:310px;top:108px;width:9px;height:315px;background:#cdcdcd"></div>
<svg class="a" style="left:311px;top:101px" width="7" height="5" viewBox="0 0 7 5"><path d="M1.3 3.9L3.5 1.5L5.7 3.9" stroke="#505050" stroke-width="1.2" fill="none"/></svg>
<svg class="a" style="left:311.1px;top:578.6px" width="7" height="5" viewBox="0 0 7 5"><path d="M1.3 1.1L3.5 3.5L5.7 1.1" stroke="#505050" stroke-width="1.2" fill="none"/></svg>
<div class="a" style="left:9px;top:586.5px;width:310px;height:9px;background:#f0f0f0"></div>
<div class="a" style="left:19.5px;top:586.5px;width:106px;height:9px;background:#cdcdcd"></div>
<svg class="a" style="left:11.5px;top:587.5px" width="5" height="7" viewBox="0 0 5 7"><path d="M3.7 1.5L1.5 3.5L3.7 5.5" stroke="#505050" stroke-width="1.2" fill="none"/></svg>
<svg class="a" style="left:302.3px;top:587.4px" width="5" height="7" viewBox="0 0 5 7"><path d="M1.3 1.5L3.5 3.5L1.3 5.5" stroke="#505050" stroke-width="1.2" fill="none"/></svg>
<div class="a" style="left:330.2px;top:70.9px;width:504.3px;height:23px;background:#fffdb8;border:1px solid #f4f4d8;border-top-color:#b4b4a8;border-left-color:#d0d0b8"></div>
<div class="t" style="left:566.25px;top:77.30px;line-height:12px;font-size:10.5px;letter-spacing:-0.573px;color:#e00000;font-weight:bold;font-family:'DejaVu Sans',sans-serif">Kara1</div>
<div class="a" style="left:330.2px;top:97px;width:504.3px;height:201px;background:#a0a0a0;border:1px solid #8c9096;border-right-color:#b0b0b0;border-bottom-color:#e4e8e8"></div>
<div class="hdr" style="left:331.2px;top:98px;width:22.80000000000001px;height:19.5px;background:#f0f0f0;border-right-color:#a0a0a0;border-bottom-color:#8a8a8a;box-shadow:inset 1px 1px 0 #fcfcfc"></div>
<div class="hdr" style="left:354px;top:98px;width:134.8px;height:19.5px;background:#f0f0f0;border-right-color:#a0a0a0;border-bottom-color:#8a8a8a;box-shadow:inset 1px 1px 0 #fcfcfc"></div>
<div class="hdr" style="left:488.8px;top:98px;width:35.99999999999994px;height:19.5px;background:#f0f0f0;border-right-color:#a0a0a0;border-bottom-color:#8a8a8a;box-shadow:inset 1px 1px 0 #fcfcfc"></div>
<div class="hdr" style="left:524.8px;top:98px;width:27.0px;height:19.5px;background:#f0f0f0;border-right-color:#a0a0a0;border-bottom-color:#8a8a8a;box-shadow:inset 1px 1px 0 #fcfcfc"></div>
<div class="hdr" style="left:551.8px;top:98px;width:54.0px;height:19.5px;background:#f0f0f0;border-right-color:#a0a0a0;border-bottom-color:#8a8a8a;box-shadow:inset 1px 1px 0 #fcfcfc"></div>
<div class="hdr" style="left:605.8px;top:98px;width:27.5px;height:19.5px;background:#f0f0f0;border-right-color:#a0a0a0;border-bottom-color:#8a8a8a;box-shadow:inset 1px 1px 0 #fcfcfc"></div>
<div class="hdr" style="left:633.3px;top:98px;width:54.0px;height:19.5px;background:#f0f0f0;border-right-color:#a0a0a0;border-bottom-color:#8a8a8a;box-shadow:inset 1px 1px 0 #fcfcfc"></div>
<div class="hdr" style="left:687.3px;top:98px;width:62.5px;height:19.5px;background:#f0f0f0;border-right-color:#a0a0a0;border-bottom-color:#8a8a8a;box-shadow:inset 1px 1px 0 #fcfcfc"></div>
<div class="hdr" style="left:749.8px;top:98px;width:84.20000000000005px;height:19.5px;background:#f0f0f0;border-right-color:#a0a0a0;border-bottom-color:#8a8a8a;box-shadow:inset 1px 1px 0 #fcfcfc"></div>
<div class="t" style="left:401.30px;top:103.10px;line-height:12px;letter-spacing:-0.322px">Tên hàng</div>
<div class="t" style="left:497.35px;top:103.10px;line-height:12px;letter-spacing:-0.850px">ĐVT</div>
<div class="t" style="left:531.83px;top:103.10px;line-height:12px;letter-spacing:-0.900px">SL</div>
<div class="t" style="left:562.20px;top:103.10px;line-height:12px;letter-spacing:-0.411px">Đơn giá</div>
<div class="t" style="left:608.70px;top:103.10px;line-height:12px;letter-spacing:-0.892px">%CK</div>
<div class="t" style="left:636.50px;top:103.10px;line-height:12px;letter-spacing:-0.251px">Thành tiền</div>
<div class="t" style="left:698.50px;top:103.10px;line-height:12px;letter-spacing:-0.305px">Lúc thêm</div>
<div class="t" style="left:801.00px;top:103.10px;line-height:12px;letter-spacing:-0.244px">Ghi chú</div>
<div class="a" style="left:331.2px;top:287px;width:502.8px;height:10px;background:#f0f0f0"></div>
<div class="a" style="left:341px;top:287px;width:437px;height:10px;background:#cdcdcd"></div>
<svg class="a" style="left:333px;top:288.5px" width="5" height="7" viewBox="0 0 5 7"><path d="M3.7 1.5L1.5 3.5L3.7 5.5" stroke="#505050" stroke-width="1.2" fill="none"/></svg>
<svg class="a" style="left:826.5px;top:288.5px" width="5" height="7" viewBox="0 0 5 7"><path d="M1.3 1.5L3.5 3.5L1.3 5.5" stroke="#505050" stroke-width="1.2" fill="none"/></svg>
<div class="btn dis" style="left:330px;top:300.4px;width:173px;height:20.400000000000034px"></div>
<div class="t" style="left:403.00px;top:305.40px;letter-spacing:-0.602px;color:#a8a8a8"><u>G</u>hi F2</div>
<div class="btn" style="left:509.2px;top:300.4px;width:104.09999999999997px;height:20.400000000000034px"></div>
<div class="t" style="left:545.75px;top:305.40px;letter-spacing:-0.392px"><u>L</u>oại F8</div>
<div class="btn" style="left:621.5px;top:300.4px;width:103.5px;height:20.400000000000034px"></div>
<div class="t" style="left:642.75px;top:305.40px;letter-spacing:-0.217px">Nạp từ combo</div>
<div class="btn" style="left:730.9px;top:300.4px;width:104.10000000000002px;height:20.400000000000034px"></div>
<div class="t" style="left:764.45px;top:305.40px;letter-spacing:-0.502px"><u>T</u>hêm F9</div>
<div class="lst" style="left:330.2px;top:326px;width:504.8px;height:126px"></div>
<div class="hdr" style="left:331.2px;top:327px;width:84.80000000000001px;height:14px;"></div>
<div class="t" style="left:334.20px;top:328.80px;line-height:12px;letter-spacing:-0.224px">Dịch vụ</div>
<div class="hdr" style="left:416px;top:327px;width:67.60000000000002px;height:14px;"></div>
<div class="t" style="left:420.50px;top:328.80px;line-height:12px;letter-spacing:-0.251px">Thành tiền</div>
<div class="hdr" style="left:483.6px;top:327px;width:94.39999999999998px;height:14px;"></div>
<div class="t" style="left:487.60px;top:328.80px;line-height:12px;letter-spacing:-0.579px">Bắt đầu</div>
<div class="hdr" style="left:578px;top:327px;width:81px;height:14px;"></div>
<div class="t" style="left:582.00px;top:328.80px;line-height:12px;letter-spacing:-0.301px">Đã dùng</div>
<div class="hdr" style="left:659px;top:327px;width:36px;height:14px;"></div>
<div class="t" style="left:663.00px;top:328.80px;line-height:12px;letter-spacing:-0.392px">%CK</div>
<div class="hdr" style="left:695px;top:327px;width:139px;height:14px;border-right:none;"></div>
<div class="btn dis" style="left:330px;top:456.2px;width:68px;height:20.100000000000023px"></div>
<div class="t" style="left:347.50px;top:461.05px;letter-spacing:-0.429px;color:#a8a8a8">Loại NV</div>
<div class="btn dis" style="left:401px;top:456.2px;width:70.5px;height:20.100000000000023px"></div>
<div class="t" style="left:417.25px;top:461.05px;letter-spacing:-0.429px;color:#a8a8a8">Chọn NV</div>
<div class="btn dis" style="left:477.5px;top:456.2px;width:67.5px;height:20.100000000000023px"></div>
<div class="t" style="left:494.75px;top:461.05px;letter-spacing:0.146px;color:#a8a8a8">Đổi giờ</div>
<div class="btn dis" style="left:549px;top:456.2px;width:68px;height:20.100000000000023px"></div>
<div class="t" style="left:565.00px;top:461.05px;letter-spacing:-0.669px;color:#a8a8a8">Chạy DV</div>
<div class="btn dis" style="left:621px;top:456.2px;width:68px;height:20.100000000000023px"></div>
<div class="t" style="left:635.50px;top:461.05px;letter-spacing:-0.452px;color:#a8a8a8">Dừng DV</div>
<div class="btn dis" style="left:693px;top:456.2px;width:67.5px;height:20.100000000000023px"></div>
<div class="t" style="left:710.75px;top:461.05px;letter-spacing:-0.493px;color:#a8a8a8">Xóa DV</div>
<div class="btn dis" style="left:764px;top:456.2px;width:71px;height:20.100000000000023px"></div>
<div class="t" style="left:780.50px;top:461.05px;letter-spacing:-0.705px;color:#a8a8a8">Thêm DV</div>
<div class="a" style="left:330px;top:482px;width:504.5px;height:115.8px;border:1px solid #b8c4c4;background:#f4fbfa"></div>
<div class="t" style="left:339.00px;top:494.80px;line-height:12px;letter-spacing:-0.302px">Hàng</div>
<div class="a" style="left:384px;top:490px;width:113px;height:21px;background:#fbbe1a"></div>
<div class="t" style="left:490.94px;top:495.60px;line-height:12px;font-weight:bold;font-family:'Liberation Serif',serif;font-size:12.5px">0</div>
<div class="t" style="left:345.00px;top:518.80px;line-height:12px;letter-spacing:-0.069px">giảm %</div>
<div class="inp" style="left:384px;top:514.5px;width:49px;height:20.5px"></div>
<div class="a" style="left:432.5px;top:514.5px;width:64.5px;height:20.5px;background:#c8ffff"></div>
<div class="t" style="left:490.94px;top:519.80px;line-height:12px;font-weight:bold;font-family:'Liberation Serif',serif;font-size:12.5px">0</div>
<div class="t" style="left:339.00px;top:547.80px;line-height:12px;letter-spacing:-0.187px">D.vụ</div>
<div class="a" style="left:384px;top:543.5px;width:113px;height:20px;background:#38860e"></div>
<div class="t" style="left:490.94px;top:548.60px;line-height:12px;color:#e8f0e0;font-weight:bold;font-family:'Liberation Serif',serif;font-size:12.5px">0</div>
<div class="t" style="left:345.00px;top:574.80px;line-height:12px;letter-spacing:-0.069px">giảm %</div>
<div class="inp" style="left:384px;top:570.5px;width:49px;height:20.5px"></div>
<div class="a" style="left:432.5px;top:570.5px;width:64.5px;height:20.5px;background:#c8ffff"></div>
<div class="t" style="left:490.94px;top:575.80px;line-height:12px;font-weight:bold;font-family:'Liberation Serif',serif;font-size:12.5px">0</div>
<div class="t" style="left:513.8px;top:494.6px;letter-spacing:0.15px"><u>V</u>AT%</div>
<div class="inp" style="left:546.8px;top:490px;width:36px;height:21px"></div>
<div class="a" style="left:583px;top:490px;width:79px;height:21px;background:#ebebeb;border:1px solid #e0e4e8"></div>
<div class="t" style="left:527.00px;top:518.80px;line-height:12px;letter-spacing:-0.900px">Bớt</div>
<div class="inp" style="left:546.8px;top:514.2px;width:114.8px;height:20.5px"></div>
<div class="t" style="left:686.00px;top:494.30px;line-height:12px;letter-spacing:-0.264px">Tổng</div>
<div class="a" style="left:711px;top:490px;width:117px;height:20.5px;background:#ffffb4;border:1px solid #f0f0c8;border-top-color:#d8d8b8"></div>
<div class="t" style="left:821.44px;top:495.60px;line-height:12px;color:#000080;font-weight:bold;font-family:'Liberation Serif',serif;font-size:12.5px">0</div>
<div class="btn" style="left:672.3px;top:514.3px;width:35.7px;height:20.7px"></div>
<div class="t" style="left:681.65px;top:519.60px;line-height:12px;letter-spacing:-0.900px">Gộp</div>
<div class="a" style="left:711px;top:514.2px;width:117px;height:20.5px;background:#ffffb4;border:1px solid #f0f0c8;border-top-color:#d8d8b8"></div>
<div class="t" style="left:821.44px;top:519.80px;line-height:12px;color:#800060;font-weight:bold;font-family:'Liberation Serif',serif;font-size:12.5px">0</div>
<div class="t" style="left:517.00px;top:561.80px;line-height:12px;letter-spacing:0.235px">P.thu</div>
<div class="a" style="left:547.5px;top:547.5px;width:278.5px;height:43.5px;background:#028002"></div>
<div class="t" style="left:682.05px;top:562.30px;line-height:16px;font-size:16px;color:#f8f820;font-weight:bold">0</div>
<div class="cmb" style="left:843.3px;top:71.2px;width:193.70000000000005px;height:17.0px"><i></i></div>
<div class="cmb" style="left:1041px;top:71.2px;width:99px;height:17.0px"><i></i></div>
<div class="t" style="left:1044.00px;top:74.50px;line-height:12px;letter-spacing:-0.558px">Tất cả</div>
<div class="t" style="left:843px;top:100.5px;letter-spacing:-0.1px">Tê<u>n</u></div>
<div class="inp" style="left:871px;top:96.6px;width:103.5px;height:17px;border-top-color:#85898f;border-left-color:#959aa0"></div>
<div class="inp" style="left:979px;top:96.6px;width:103.5px;height:17px;border-top-color:#85898f;border-left-color:#959aa0"></div>
<div class="a" style="left:1094.5px;top:102.3px;width:7px;height:7.5px;background:#fff;border:1px solid #e0e4e8;border-top-color:#70747a;border-left-color:#70747a"></div>
<div class="t" style="left:1125.00px;top:101.30px;line-height:12px;letter-spacing:-0.562px">sẵn</div>
<div class="lst" style="left:843px;top:118.4px;width:295px;height:202px"></div>
<div class="t" style="left:847.00px;top:136.80px;line-height:12px;letter-spacing:-0.234px">0 Huong Duong</div>
<div class="t" style="left:998.00px;top:136.80px;line-height:12px;letter-spacing:-0.092px">20.000</div>
<div class="t" style="left:1068.00px;top:136.80px;line-height:12px">0</div>
<div class="a" style="left:844px;top:149.30px;width:267.7px;height:15.00px;background:#ececec"></div>
<div class="t" style="left:847.00px;top:151.80px;line-height:12px;letter-spacing:-0.231px">1 Hoa quả</div>
<div class="t" style="left:998.00px;top:151.80px;line-height:12px;letter-spacing:-0.090px">100.000</div>
<div class="t" style="left:1068.00px;top:151.80px;line-height:12px">0</div>
<div class="t" style="left:847.00px;top:166.80px;line-height:12px;letter-spacing:-0.189px">10 Sữa Trái cây Nutri</div>
<div class="t" style="left:998.00px;top:166.80px;line-height:12px;letter-spacing:-0.092px">15.000</div>
<div class="t" style="left:1068.00px;top:166.80px;line-height:12px">0</div>
<div class="a" style="left:844px;top:179.30px;width:267.7px;height:15.00px;background:#b3c3d4"></div>
<div class="t" style="left:847.00px;top:181.80px;line-height:12px;letter-spacing:-0.208px;color:#e4ecf4">11 Nước chải cây</div>
<div class="t" style="left:998.00px;top:181.80px;line-height:12px;letter-spacing:-0.092px;color:#e4ecf4">15.000</div>
<div class="t" style="left:1068.00px;top:181.80px;line-height:12px;color:#e4ecf4">0</div>
<div class="t" style="left:847.00px;top:196.80px;line-height:12px;letter-spacing:-0.223px">12 Nước Dừa Thái</div>
<div class="t" style="left:998.00px;top:196.80px;line-height:12px;letter-spacing:-0.092px">15.000</div>
<div class="t" style="left:1068.00px;top:196.80px;line-height:12px">0</div>
<div class="a" style="left:844px;top:209.30px;width:267.7px;height:15.00px;background:#ececec"></div>
<div class="t" style="left:847.00px;top:211.80px;line-height:12px;letter-spacing:-0.226px">13 Chanh Muối</div>
<div class="t" style="left:998.00px;top:211.80px;line-height:12px;letter-spacing:-0.092px">15.000</div>
<div class="t" style="left:1068.00px;top:211.80px;line-height:12px">0</div>
<div class="t" style="left:847.00px;top:226.80px;line-height:12px;letter-spacing:-0.224px">14 Nước Cocacola</div>
<div class="t" style="left:998.00px;top:226.80px;line-height:12px;letter-spacing:-0.092px">15.000</div>
<div class="t" style="left:1068.00px;top:226.80px;line-height:12px">0</div>
<div class="a" style="left:844px;top:239.30px;width:267.7px;height:15.00px;background:#ececec"></div>
<div class="t" style="left:847.00px;top:241.80px;line-height:12px;letter-spacing:-0.236px">15 Nước Khoáng</div>
<div class="t" style="left:998.00px;top:241.80px;line-height:12px;letter-spacing:-0.092px">10.000</div>
<div class="t" style="left:1068.00px;top:241.80px;line-height:12px">0</div>
<div class="t" style="left:847.00px;top:256.80px;line-height:12px;letter-spacing:-0.226px">16 Khăn Lạnh</div>
<div class="t" style="left:998.00px;top:256.80px;line-height:12px;letter-spacing:-0.094px">2.000</div>
<div class="t" style="left:1068.00px;top:256.80px;line-height:12px">0</div>
<div class="a" style="left:844px;top:269.30px;width:267.7px;height:15.00px;background:#ececec"></div>
<div class="t" style="left:847.00px;top:271.80px;line-height:12px;letter-spacing:-0.222px">17 Shisha</div>
<div class="t" style="left:998.00px;top:271.80px;line-height:12px;letter-spacing:-0.090px">150.000</div>
<div class="t" style="left:1068.00px;top:271.80px;line-height:12px">0</div>
<div class="t" style="left:847.00px;top:286.80px;line-height:12px;letter-spacing:-0.212px">18 Mít Sấy</div>
<div class="t" style="left:998.00px;top:286.80px;line-height:12px;letter-spacing:-0.092px">40.000</div>
<div class="t" style="left:1068.00px;top:286.80px;line-height:12px">0</div>
<div class="a" style="left:844px;top:299.30px;width:267.7px;height:15.00px;background:#ececec"></div>
<div class="t" style="left:847.00px;top:301.80px;line-height:12px;letter-spacing:-0.198px">19 Hạt rẻ cười</div>
<div class="t" style="left:998.00px;top:301.80px;line-height:12px;letter-spacing:-0.092px">30.000</div>
<div class="t" style="left:1068.00px;top:301.80px;line-height:12px">0</div>
<div class="a" style="left:844px;top:314.30px;width:280px;height:5.20px;overflow:hidden"><div class="t" style="left:3px;top:1.7px">20 Bò khô xé sợi</div><div class="t" style="left:154px;top:1.7px">40.000</div><div class="t" style="left:224px;top:1.7px">0</div></div>
<div class="a" style="left:994px;top:134px;width:1px;height:185.5px;background:rgba(246,246,246,.8)"></div>
<div class="a" style="left:1063.5px;top:134px;width:1px;height:185.5px;background:rgba(246,246,246,.8)"></div>
<div class="a" style="left:1110px;top:134px;width:1px;height:185.5px;background:rgba(246,246,246,.8)"></div>
<div class="hdr" style="left:844px;top:119.4px;width:150.5px;height:13.5px;"></div>
<div class="t" style="left:848.00px;top:121.55px;line-height:12px;letter-spacing:-0.322px">Tên hàng</div>
<div class="hdr" style="left:994.5px;top:119.4px;width:69.5px;height:13.5px;"></div>
<div class="t" style="left:998.50px;top:121.55px;line-height:12px;letter-spacing:-0.781px">Giá</div>
<div class="hdr" style="left:1064px;top:119.4px;width:46.5px;height:13.5px;"></div>
<div class="t" style="left:1068.00px;top:121.55px;line-height:12px;letter-spacing:-0.108px">SL tồn</div>
<div class="hdr" style="left:1110.5px;top:119.4px;width:16.0px;height:13.5px;border-right:none;"></div>
<div class="a" style="left:1126.5px;top:119.4px;width:10.5px;height:200px;background:#f7f7f7"></div>
<div class="a" style="left:1127.5px;top:130px;width:9px;height:27px;background:#cdcdcd"></div>
<svg class="a" style="left:1128.5px;top:123px" width="7" height="5" viewBox="0 0 7 5"><path d="M1.3 3.9L3.5 1.5L5.7 3.9" stroke="#505050" stroke-width="1.2" fill="none"/></svg>
<svg class="a" style="left:1128.5px;top:312.5px" width="7" height="5" viewBox="0 0 7 5"><path d="M1.3 1.1L3.5 3.5L5.7 1.1" stroke="#505050" stroke-width="1.2" fill="none"/></svg>
<div class="inp" style="left:843px;top:326.5px;width:295px;height:19px;border-color:#c4ccd4;border-top-color:#8a9098"></div>
<div class="lst" style="left:843px;top:350.5px;width:294px;height:246px"></div>
<div class="a" style="left:844px;top:381.00px;width:292px;height:1px;background:#f6f6f6"></div>
<div class="a" style="left:844px;top:396.00px;width:292px;height:1px;background:#f6f6f6"></div>
<div class="a" style="left:844px;top:411.00px;width:292px;height:1px;background:#f6f6f6"></div>
<div class="a" style="left:844px;top:426.00px;width:292px;height:1px;background:#f6f6f6"></div>
<div class="a" style="left:844px;top:441.00px;width:292px;height:1px;background:#f6f6f6"></div>
<div class="a" style="left:844px;top:456.00px;width:292px;height:1px;background:#f6f6f6"></div>
<div class="a" style="left:844px;top:471.00px;width:292px;height:1px;background:#f6f6f6"></div>
<div class="a" style="left:844px;top:486.00px;width:292px;height:1px;background:#f6f6f6"></div>
<div class="a" style="left:844px;top:501.00px;width:292px;height:1px;background:#f6f6f6"></div>
<div class="a" style="left:844px;top:516.00px;width:292px;height:1px;background:#f6f6f6"></div>
<div class="a" style="left:844px;top:531.00px;width:292px;height:1px;background:#f6f6f6"></div>
<div class="a" style="left:844px;top:546.00px;width:292px;height:1px;background:#f6f6f6"></div>
<div class="a" style="left:844px;top:561.00px;width:292px;height:1px;background:#f6f6f6"></div>
<div class="a" style="left:844px;top:576.00px;width:292px;height:1px;background:#f6f6f6"></div>
<div class="a" style="left:844px;top:591.00px;width:292px;height:1px;background:#f6f6f6"></div>
<div class="a" style="left:934px;top:365px;width:1px;height:230.5px;background:#f5f5f5"></div>
<div class="a" style="left:961.5px;top:365px;width:1px;height:230.5px;background:#f5f5f5"></div>
<div class="a" style="left:1005px;top:365px;width:1px;height:230.5px;background:#f5f5f5"></div>
<div class="a" style="left:1050.5px;top:365px;width:1px;height:230.5px;background:#f5f5f5"></div>
<div class="t" style="left:847.00px;top:369.00px;line-height:12px;letter-spacing:-0.220px">karaoke 200</div>
<div class="t" style="left:937.00px;top:369.00px;line-height:12px">h</div>
<div class="t" style="left:964.50px;top:369.00px;line-height:12px;letter-spacing:-0.090px">200.000</div>
<div class="t" style="left:1009.00px;top:369.00px;line-height:12px;letter-spacing:-0.092px">50.000</div>
<div class="a" style="left:844px;top:381.50px;width:207px;height:15.0px;background:#ececec"></div>
<div class="t" style="left:847.00px;top:384.00px;line-height:12px;letter-spacing:-0.220px">karaoke 260</div>
<div class="t" style="left:937.00px;top:384.00px;line-height:12px">h</div>
<div class="t" style="left:964.50px;top:384.00px;line-height:12px;letter-spacing:-0.090px">260.000</div>
<div class="t" style="left:1009.00px;top:384.00px;line-height:12px;letter-spacing:-0.090px">200.000</div>
<div class="t" style="left:847.00px;top:399.00px;line-height:12px;letter-spacing:-0.220px">karaoke 300</div>
<div class="t" style="left:937.00px;top:399.00px;line-height:12px">h</div>
<div class="t" style="left:964.50px;top:399.00px;line-height:12px;letter-spacing:-0.090px">300.000</div>
<div class="t" style="left:1009.00px;top:399.00px;line-height:12px;letter-spacing:-0.092px">50.000</div>
<div class="a" style="left:844px;top:411.50px;width:207px;height:15.0px;background:#ececec"></div>
<div class="t" style="left:847.00px;top:414.00px;line-height:12px;letter-spacing:-0.227px">Karaoke 320</div>
<div class="t" style="left:937.00px;top:414.00px;line-height:12px">h</div>
<div class="t" style="left:964.50px;top:414.00px;line-height:12px;letter-spacing:-0.090px">320.000</div>
<div class="t" style="left:1009.00px;top:414.00px;line-height:12px;letter-spacing:-0.090px">100.000</div>
<div class="t" style="left:847.00px;top:429.00px;line-height:12px;letter-spacing:-0.220px">karaoke 350</div>
<div class="t" style="left:937.00px;top:429.00px;line-height:12px">h</div>
<div class="t" style="left:964.50px;top:429.00px;line-height:12px;letter-spacing:-0.090px">350.000</div>
<div class="t" style="left:1009.00px;top:429.00px;line-height:12px;letter-spacing:-0.092px">50.000</div>
<div class="a" style="left:844px;top:441.50px;width:207px;height:15.0px;background:#ececec"></div>
<div class="t" style="left:847.00px;top:444.00px;line-height:12px;letter-spacing:-0.220px">karaoke 120</div>
<div class="t" style="left:937.00px;top:444.00px;line-height:12px">h</div>
<div class="t" style="left:964.50px;top:444.00px;line-height:12px;letter-spacing:-0.090px">120.000</div>
<div class="t" style="left:1009.00px;top:444.00px;line-height:12px;letter-spacing:-0.092px">10.000</div>
<div class="t" style="left:847.00px;top:459.00px;line-height:12px;letter-spacing:-0.220px">karaoke 150</div>
<div class="t" style="left:937.00px;top:459.00px;line-height:12px">h</div>
<div class="t" style="left:964.50px;top:459.00px;line-height:12px;letter-spacing:-0.090px">150.000</div>
<div class="t" style="left:1009.00px;top:459.00px;line-height:12px;letter-spacing:-0.092px">20.000</div>
<div class="hdr" style="left:844px;top:352px;width:90.5px;height:12.5px;"></div>
<div class="t" style="left:848.00px;top:353.05px;line-height:12px;letter-spacing:-0.224px">Dịch vụ</div>
<div class="hdr" style="left:934.5px;top:352px;width:27.5px;height:12.5px;"></div>
<div class="t" style="left:937.50px;top:353.05px;line-height:12px;letter-spacing:-0.500px">ĐVT</div>
<div class="hdr" style="left:962px;top:352px;width:43.5px;height:12.5px;"></div>
<div class="t" style="left:965.00px;top:353.05px;line-height:12px;letter-spacing:-0.077px">Đơn giá</div>
<div class="hdr" style="left:1005.5px;top:352px;width:45.5px;height:12.5px;"></div>
<div class="t" style="left:1008.50px;top:353.05px;line-height:12px;letter-spacing:-0.076px">Phí tối...</div>
<div class="hdr" style="left:1051px;top:352px;width:85px;height:12.5px;border-right:none;"></div>
<div class="t" style="left:958.40px;top:567.40px;line-height:14px;font-size:11.5px;letter-spacing:0.216px;color:rgba(120,120,120,0.5)">Activate Windows</div>
<div class="t" style="left:958.40px;top:582.10px;line-height:12px;font-size:9px;letter-spacing:-0.031px;color:rgba(120,120,120,0.45)">Go to Settings to activate Windows.</div>
<div class="a" style="left:1147px;top:41.3px;width:5px;height:567px;background:#fdfefe"></div><div class="a" style="left:1150.6px;top:0;width:1.4px;height:608px;background:#2f9be0"></div>
<div class="a" style="left:0;top:607.7px;width:1152px;height:15.5px;background:#e1e1e1"></div><div class="a" style="left:1150.8px;top:608px;width:1.2px;height:15px;background:#222"></div>
<div class="t" style="left:-0.50px;top:612.00px;line-height:12px;letter-spacing:-0.172px">iShopman - phan mem quan ly ban hang cho cac nganh hang, ban buon, ban le, ma vach</div>
<div class="a" style="left:1091.4px;top:609.5px;width:16.799999999999955px;height:14px;border:1px solid #a8a8a8;border-right-color:#f4f4f4;border-bottom:none"></div>
<div class="a" style="left:1109.4px;top:609.5px;width:21.199999999999818px;height:14px;border:1px solid #a8a8a8;border-right-color:#f4f4f4;border-bottom:none"></div>
<div class="a" style="left:1131.8px;top:609.5px;width:17.90000000000009px;height:14px;border:1px solid #a8a8a8;border-right-color:#f4f4f4;border-bottom:none"></div>
<div class="t" style="left:1111px;top:612.3px;width:18.5px;overflow:hidden;font-size:11.5px;line-height:13px;letter-spacing:-0.3px">NUM</div>
</body></html>
